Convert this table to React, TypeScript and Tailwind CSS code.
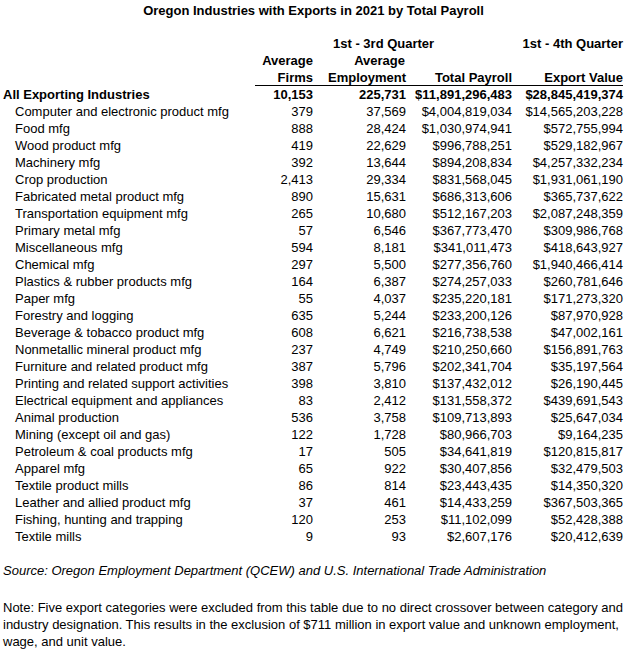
const rows: [string, string, string, string, string][] = [
  ["Computer and electronic product mfg", "379", "37,569", "$4,004,819,034", "$14,565,203,228"],
  ["Food mfg", "888", "28,424", "$1,030,974,941", "$572,755,994"],
  ["Wood product mfg", "419", "22,629", "$996,788,251", "$529,182,967"],
  ["Machinery mfg", "392", "13,644", "$894,208,834", "$4,257,332,234"],
  ["Crop production", "2,413", "29,334", "$831,568,045", "$1,931,061,190"],
  ["Fabricated metal product mfg", "890", "15,631", "$686,313,606", "$365,737,622"],
  ["Transportation equipment mfg", "265", "10,680", "$512,167,203", "$2,087,248,359"],
  ["Primary metal mfg", "57", "6,546", "$367,773,470", "$309,986,768"],
  ["Miscellaneous mfg", "594", "8,181", "$341,011,473", "$418,643,927"],
  ["Chemical mfg", "297", "5,500", "$277,356,760", "$1,940,466,414"],
  ["Plastics & rubber products mfg", "164", "6,387", "$274,257,033", "$260,781,646"],
  ["Paper mfg", "55", "4,037", "$235,220,181", "$171,273,320"],
  ["Forestry and logging", "635", "5,244", "$233,200,126", "$87,970,928"],
  ["Beverage & tobacco product mfg", "608", "6,621", "$216,738,538", "$47,002,161"],
  ["Nonmetallic mineral product mfg", "237", "4,749", "$210,250,660", "$156,891,763"],
  ["Furniture and related product mfg", "387", "5,796", "$202,341,704", "$35,197,564"],
  ["Printing and related support activities", "398", "3,810", "$137,432,012", "$26,190,445"],
  ["Electrical equipment and appliances", "83", "2,412", "$131,558,372", "$439,691,543"],
  ["Animal production", "536", "3,758", "$109,713,893", "$25,647,034"],
  ["Mining (except oil and gas)", "122", "1,728", "$80,966,703", "$9,164,235"],
  ["Petroleum & coal products mfg", "17", "505", "$34,641,819", "$120,815,817"],
  ["Apparel mfg", "65", "922", "$30,407,856", "$32,479,503"],
  ["Textile product mills", "86", "814", "$23,443,435", "$14,350,320"],
  ["Leather and allied product mfg", "37", "461", "$14,433,259", "$367,503,365"],
  ["Fishing, hunting and trapping", "120", "253", "$11,102,099", "$52,428,388"],
  ["Textile mills", "9", "93", "$2,607,176", "$20,412,639"],
];

const cols = "grid grid-cols-[255px_58px_93px_106px_111px] h-[17px]";

export default function App() {
  return (
    <div className="w-[627px] h-[651px] bg-white text-black font-['Liberation_Sans',Arial,sans-serif] text-[13px] leading-[17px]">
      <h1 className="h-[19px] pt-[2px] text-center font-bold text-[13px]">
        Oregon Industries with Exports in 2021 by Total Payroll
      </h1>

      <div className="mt-[16px]">
        <div className={`${cols} font-bold`}>
          <div />
          <div />
          <div className="col-span-2 pl-[20px]">1st - 3rd Quarter</div>
          <div className="text-right">1st - 4th Quarter</div>
        </div>
        <div className={`${cols} font-bold`}>
          <div />
          <div className="text-right">Average</div>
          <div className="text-right pr-[1px]">Average</div>
          <div />
          <div />
        </div>
        <div className="grid grid-cols-[255px_58px_93px_106px_111px] h-[16px] font-bold">
          <div />
          <div className="text-right">Firms</div>
          <div className="text-right">Employment</div>
          <div className="text-right">Total Payroll</div>
          <div className="text-right">Export Value</div>
        </div>
        <div className="grid grid-cols-[255px_368px]">
          <div />
          <div className="border-t border-black" />
        </div>
        <div className={`${cols} font-bold`}>
          <div className="pl-[3px]">All Exporting Industries</div>
          <div className="text-right">10,153</div>
          <div className="text-right">225,731</div>
          <div className="text-right">$11,891,296,483</div>
          <div className="text-right">$28,845,419,374</div>
        </div>
        {rows.map((r) => (
          <div key={r[0]} className={cols}>
            <div className="pl-[15px]">{r[0]}</div>
            <div className="text-right">{r[1]}</div>
            <div className="text-right">{r[2]}</div>
            <div className="text-right">{r[3]}</div>
            <div className="text-right">{r[4]}</div>
          </div>
        ))}
      </div>

      <p className="mt-[17px] pl-[3px] italic">
        Source: Oregon Employment Department (QCEW) and U.S. International Trade Administration
      </p>
      <p className="mt-[20px] pl-[3px] pr-[3px]">
        Note: Five export categories were excluded from this table due to no direct crossover between category and
        industry designation. This results in the exclusion of $711 million in export value and unknown employment,
        wage, and unit value.
      </p>
    </div>
  );
}
